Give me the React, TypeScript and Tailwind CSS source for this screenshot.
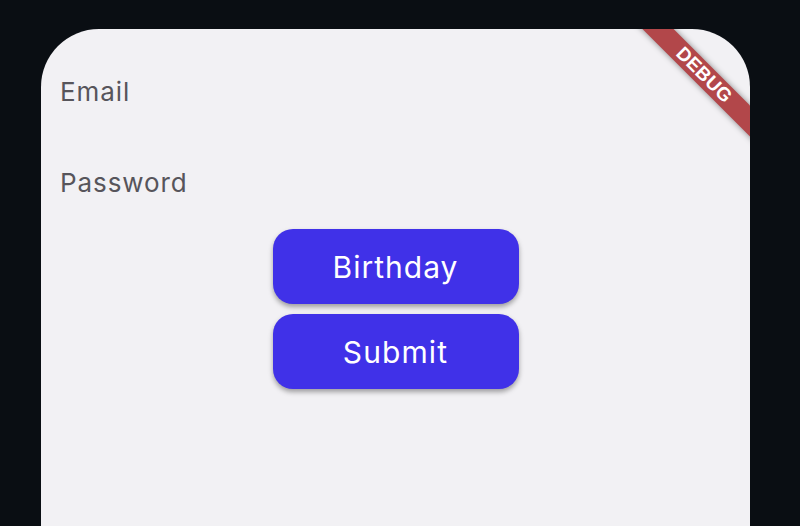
import React from "react";

export default function App() {
  return (
    <div className="w-full h-[526px] bg-[#0a0e13] pt-[29px] pl-[41px] pr-[50px] overflow-hidden">
      <div
        className="relative h-full bg-[#f2f1f4] rounded-t-[58px] overflow-hidden px-[19px]"
        style={{ fontFamily: "Inter, 'Noto Sans', sans-serif" }}
      >
        <div className="pt-[48px] flex flex-col">
          <div className="h-[30px] text-[26px] leading-[30px] tracking-[0.9px] text-[#57555b]">Email</div>
          <div className="h-[30px] mt-[61px] text-[26px] leading-[30px] tracking-[0.9px] text-[#57555b]">Password</div>
        </div>
        <div className="mt-[31px] flex flex-col items-center gap-[10px]">
          <button className="w-[246px] h-[75px] rounded-[20px] bg-[#4031e8] text-white text-[30px] leading-[36px] tracking-[1px] shadow-[0_3px_5px_rgba(0,0,0,0.35)]">
            Birthday
          </button>
          <button className="w-[246px] h-[75px] rounded-[20px] bg-[#4031e8] text-white text-[30px] leading-[36px] tracking-[1.1px] shadow-[0_3px_5px_rgba(0,0,0,0.35)]">
            Submit
          </button>
        </div>
        <div
          className="absolute left-[563px] top-[35px] w-[200px] h-[22px] rotate-45 bg-[#b2474a] shadow-[0_0_6px_rgba(0,0,0,0.45)] flex items-center justify-center text-white text-[19px] leading-[22px] font-bold tracking-[0.3px]"
          style={{ fontFamily: "'Liberation Sans', Arial, sans-serif" }}
        >
          DEBUG
        </div>
      </div>
    </div>
  );
}
